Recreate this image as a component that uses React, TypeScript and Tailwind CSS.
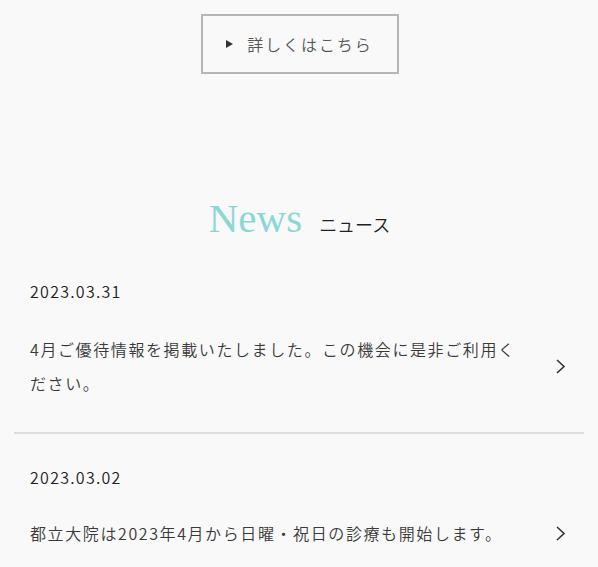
import React from 'react';

const jp = { fontFamily: '"Noto Sans CJK JP", "Noto Sans", sans-serif' };

function Chevron() {
  return (
    <svg width="11" height="17" viewBox="0 0 11 17" fill="none" className="shrink-0">
      <path d="M2 2 L9 8.5 L2 15" stroke="#333" strokeWidth="1.6" />
    </svg>
  );
}

const news = [
  { date: '2023.03.31', text: '4月ご優待情報を掲載いたしました。この機会に是非ご利用ください。' },
  { date: '2023.03.02', text: '都立大院は2023年4月から日曜・祝日の診療も開始します。' },
];

export default function App() {
  return (
    <div className="min-h-screen bg-[#f9f9f9] text-[#333] pt-[14px] font-[350]" style={jp}>
      {/* More button */}
      <div className="flex justify-center">
        <a className="w-[198px] h-[60px] ml-[1px] border-2 border-[#b5b5b5] flex items-center justify-center gap-[14px] text-[16px] tracking-[0.12em] text-[#555]">
          <span className="w-0 h-0 border-y-[4.5px] border-y-transparent border-l-[7px] border-l-[#333]" />
          <span className="leading-none">詳しくはこちら</span>
        </a>
      </div>

      {/* Heading */}
      <div className="flex items-baseline justify-center gap-[17px] mt-[124px] ml-[1px]">
        <h2 className="text-[41px] leading-none text-[#8ad8d5] font-normal" style={{ fontFamily: '"Liberation Serif", serif' }}>
          News
        </h2>
        <span className="text-[18px] leading-none text-[#222]">ニュース</span>
      </div>

      {/* List */}
      <ul className="mx-[14px] mt-[40px]">
        {news.map((n, i) => (
          <li key={n.date} className={i === 0 ? 'border-b-2 border-[#dedede] pb-[32px]' : 'pt-[31px]'}>
            <div className="pl-[16px] pr-[18px]">
              <p className="text-[16px] leading-[24px] tracking-[0.08em] text-[#222]">{n.date}</p>
              <div className={`flex items-center justify-between ${i === 0 ? 'mt-[29px]' : 'mt-[27px]'}`}>
                <p className="w-[502px] text-[16px] leading-[34px] tracking-[0.1em] text-[#3a3a3a]">{n.text}</p>
                <Chevron />
              </div>
            </div>
          </li>
        ))}
      </ul>
    </div>
  );
}
